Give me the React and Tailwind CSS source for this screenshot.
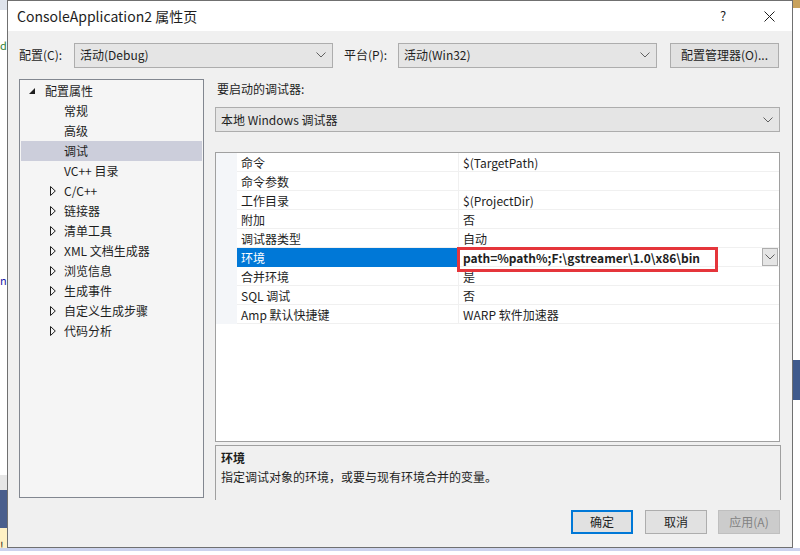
import React from "react";

const Chevron = ({ className = "" }) => (
  <svg width="10" height="6" viewBox="0 0 10 6" className={className}>
    <polyline points="0.5,0.5 5,5 9.5,0.5" fill="none" stroke="#606060" strokeWidth="1" />
  </svg>
);

const Expanded = () => (
  <svg width="6" height="6" viewBox="0 0 6 6">
    <polygon points="6,0 6,6 0,6" fill="#1e1e1e" />
  </svg>
);

const Collapsed = () => (
  <svg width="6" height="10" viewBox="0 0 6 10">
    <polygon points="0.5,0.5 5.3,5 0.5,9.5" fill="none" stroke="#1e1e1e" strokeWidth="1" />
  </svg>
);

const Select = ({ text, w }) => (
  <div className={`${w} h-[25px] border border-[#adadad] bg-[#e5e5e5] flex items-center pl-[5px] pr-[6px]`}>
    <span className="flex-1 text-[12px] text-[#1e1e1e]">{text}</span>
    <Chevron />
  </div>
);

const treeItems = [
  { t: "配置属性", lvl: 0, icon: "e" },
  { t: "常规", lvl: 1 },
  { t: "高级", lvl: 1 },
  { t: "调试", lvl: 1, sel: true },
  { t: "VC++ 目录", lvl: 1 },
  { t: "C/C++", lvl: 1, icon: "c" },
  { t: "链接器", lvl: 1, icon: "c" },
  { t: "清单工具", lvl: 1, icon: "c" },
  { t: "XML 文档生成器", lvl: 1, icon: "c" },
  { t: "浏览信息", lvl: 1, icon: "c" },
  { t: "生成事件", lvl: 1, icon: "c" },
  { t: "自定义生成步骤", lvl: 1, icon: "c" },
  { t: "代码分析", lvl: 1, icon: "c" },
];

const rows = [
  ["命令", "$(TargetPath)"],
  ["命令参数", ""],
  ["工作目录", "$(ProjectDir)"],
  ["附加", "否"],
  ["调试器类型", "自动"],
  ["环境", "path=%path%;F:\\gstreamer\\1.0\\x86\\bin", true],
  ["合并环境", "是"],
  ["SQL 调试", "否"],
  ["Amp 默认快捷键", "WARP 软件加速器"],
];

export default function App() {
  return (
    <div className="relative w-[800px] h-[555px] overflow-hidden bg-white font-['Noto_Sans_CJK_SC','Noto_Sans',sans-serif] text-[#1e1e1e]">
      {/* desktop background behind the dialog */}
      <div className="absolute left-0 top-0 w-[8px] h-[10px] bg-[#dfe4ec]" />
      <div className="absolute left-0 top-[475px] w-[8px] h-[15px] bg-[#e6e6e6]" />
      <div className="absolute left-0 top-[490px] w-[8px] h-[38px] bg-[#4a5f8d]" />
      <div className="absolute left-0 top-[528px] w-[8px] h-[20px] bg-[#fff1c4]" />
      <div className="absolute left-0 top-[40px] text-[11px] leading-none text-[#2e7d32]">d.</div>
      <div className="absolute left-0 top-[275px] text-[11px] leading-none text-[#1a1aa6]">na</div>
      <div className="absolute left-0 top-[540px] text-[11px] leading-none text-[#1e1e1e]">!</div>
      <div className="absolute right-0 top-0 w-[8px] h-[8px] bg-[#c9a35e]" />
      <div className="absolute right-0 top-[360px] w-[8px] h-[40px] bg-[#3f5a8c]" />
      <div className="absolute left-0 top-[548px] w-[800px] h-[3px] bg-[#ccd3ee]" />

      {/* dialog window */}
      <div className="absolute left-[7px] top-0 w-[786px] h-[548px] border border-[#707070] bg-[#f0f0f0] flex flex-col">
        <div className="h-[30px] bg-white flex items-center shrink-0">
          <span className="pl-[9px] text-[14px] flex-1">ConsoleApplication2 属性页</span>
          <div className="w-[46px] h-[30px] flex items-center justify-center text-[13px]">?</div>
          <div className="w-[46px] h-[30px] flex items-center justify-center">
            <svg width="11" height="11" viewBox="0 0 11 11">
              <path d="M0.5 0.5 L10.5 10.5 M10.5 0.5 L0.5 10.5" stroke="#1e1e1e" strokeWidth="1" />
            </svg>
          </div>
        </div>

        <div className="flex-1 flex flex-col px-[11px] pt-[11px]">
          {/* configuration row */}
          <div className="flex items-center h-[26px]">
            <span className="w-[55px] text-[12px]">配置(C):</span>
            <Select text="活动(Debug)" w="w-[259px]" />
            <span className="ml-[11px] w-[54px] text-[12px]">平台(P):</span>
            <Select text="活动(Win32)" w="w-[259px]" />
            <div className="ml-[13px] w-[109px] h-[25px] border border-[#adadad] bg-[#e1e1e1] flex items-center justify-center text-[12px]">
              配置管理器(O)...
            </div>
          </div>

          <div className="flex mt-[11px]">
            {/* tree */}
            <div className="w-[185px] h-[419px] border border-[#828790] bg-[#f5f5f5] p-[1px] flex flex-col">
              {treeItems.map((it, i) => (
                <div
                  key={i}
                  className={`h-[20px] flex items-center text-[12px] ${it.sel ? "bg-[#cccedb]" : ""}`}
                >
                  {it.lvl === 0 ? (
                    <>
                      <span className="w-[8px]" />
                      <Expanded />
                      <span className="ml-[10px]">{it.t}</span>
                    </>
                  ) : (
                    <>
                      <span className="w-[29px]" />
                      <span className="w-[14px] flex items-center">{it.icon === "c" ? <Collapsed /> : null}</span>
                      <span>{it.t}</span>
                    </>
                  )}
                </div>
              ))}
            </div>

            {/* right column */}
            <div className="ml-[11px] w-[566px] flex flex-col">
              <div className="h-[20px] flex items-center pl-[2px] text-[12px]">要启动的调试器:</div>
              <div className="mt-[8px]">
                <Select text="本地 Windows 调试器" w="w-[565px]" />
              </div>

              <div className="relative mt-[20px] w-[565px] h-[290px] border border-[#a0a0a0] bg-white">
                {rows.map(([n, v, sel], i) => (
                  <div key={i} className="flex h-[19px]">
                    <div className="w-[21px] bg-[#f4f6f9]" />
                    <div
                      className={`w-[221px] flex items-center pl-[4px] pt-[2px] text-[12px] border-b ${
                        sel ? "bg-[#0078d7] text-white border-[#0078d7]" : "border-[#f0f0f0]"
                      }`}
                    >
                      {n}
                    </div>
                    <div className="flex-1 flex items-center pl-[4px] text-[12px] border-l border-b border-[#f0f0f0]">
                      <span className={`pt-[2px] ${sel ? "font-bold" : ""}`}>{v}</span>
                      {sel && (
                        <div className="ml-auto mr-[1px] w-[16px] h-[18px] border border-[#adadad] bg-[#e5e5e5] flex items-center justify-center">
                          <Chevron />
                        </div>
                      )}
                    </div>
                  </div>
                ))}
                <div className="absolute left-[241px] top-[94px] w-[261px] h-[25px] border-[3px] border-[#e5353b]" />
              </div>

              <div className="mt-[3px] h-[55px] border-t border-x border-[#a0a0a0] px-[5px] pt-[3px] text-[12px]">
                <div className="font-bold leading-[17px]">环境</div>
                <div className="leading-[17px] mt-[2px]">指定调试对象的环境，或要与现有环境合并的变量。</div>
              </div>
            </div>
          </div>

          {/* buttons */}
          <div className="flex justify-end mt-[10px] mr-[1px] text-[12px]">
            <div className="w-[62px] h-[24px] border-2 border-[#0078d7] bg-[#e1e1e1] flex items-center justify-center">确定</div>
            <div className="ml-[12px] w-[62px] h-[24px] border border-[#adadad] bg-[#e1e1e1] flex items-center justify-center">取消</div>
            <div className="ml-[11px] w-[62px] h-[24px] border border-[#bfbfbf] bg-[#cccccc] text-[#838383] flex items-center justify-center">应用(A)</div>
          </div>
        </div>
      </div>
    </div>
  );
}
